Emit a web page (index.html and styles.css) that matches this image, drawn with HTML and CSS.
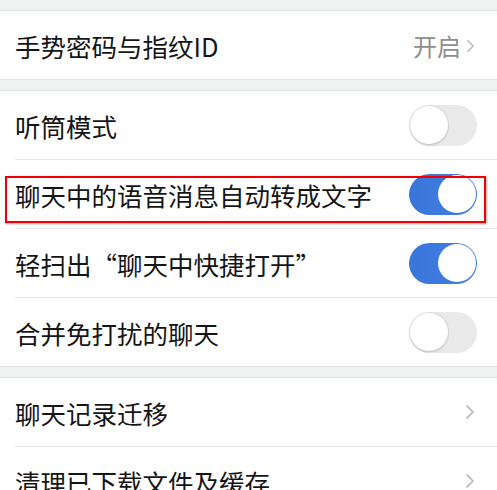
FILE: index.html
```html
<!DOCTYPE html>
<html lang="zh">
<head>
<meta charset="utf-8">
<link rel="stylesheet" href="styles.css">
</head>
<body>
<div class="page">
  <div class="group">
    <div class="row">
      <span class="label">手势密码与指纹ID</span>
      <span class="value">开启<svg class="chev chev-sm" viewBox="0 0 10 16"><polyline points="1.5,1.5 8,8 1.5,14.5"/></svg></span>
    </div>
  </div>
  <div class="group">
    <div class="row">
      <span class="label">听筒模式</span>
      <span class="toggle"><span class="knob"></span></span>
    </div>
    <div class="row highlighted">
      <span class="label">聊天中的语音消息自动转成文字</span>
      <span class="toggle on"><span class="knob"></span></span>
      <span class="mark"></span>
    </div>
    <div class="row">
      <span class="label">轻扫出“聊天中快捷打开”</span>
      <span class="toggle on"><span class="knob"></span></span>
    </div>
    <div class="row">
      <span class="label">合并免打扰的聊天</span>
      <span class="toggle"><span class="knob"></span></span>
    </div>
  </div>
  <div class="group group-wide">
    <div class="row">
      <span class="label">聊天记录迁移</span>
      <svg class="chev" viewBox="0 0 10 16"><polyline points="1.5,1.5 8,8 1.5,14.5"/></svg>
    </div>
    <div class="row">
      <span class="label">清理已下载文件及缓存</span>
      <svg class="chev" viewBox="0 0 10 16"><polyline points="1.5,1.5 8,8 1.5,14.5"/></svg>
    </div>
  </div>
</div>
</body>
</html>
```
FILE: styles.css
```css
html, body {
  margin: 0;
  padding: 0;
  background: #f0f1f1;
}
body {
  width: 497px;
  height: 490px;
  overflow: hidden;
  font-family: "Noto Sans CJK SC", "Noto Sans", sans-serif;
}
.page {
  padding-top: 10px;
}
.group {
  background: #fff;
  border-top: 1px solid #e3e3e3;
  border-bottom: 1px solid #e3e3e3;
  margin-bottom: 10px;
}
.group-wide {
  margin-top: 1px;
}
.row {
  position: relative;
  height: 68px;
  margin-left: 15px;
  padding-right: 20px;
  display: flex;
  align-items: center;
  justify-content: space-between;
  border-bottom: 1px solid #e6e6e6;
}
.row:last-child {
  border-bottom: none;
}
.label {
  font-size: 25.5px;
  color: #151515;
  line-height: 1;
  padding-top: 2px;
}
.value {
  display: flex;
  align-items: center;
  font-size: 24px;
  color: #8e8e8e;
  line-height: 1;
  padding-top: 2px;
  margin-right: 2px;
}
.chev {
  width: 10px;
  height: 16px;
  fill: none;
  stroke: #c3c3c6;
  stroke-width: 2;
  margin-right: 2px;
}
.chev-sm {
  width: 9px;
  height: 14px;
  margin-left: 5px;
  margin-right: 0;
}
.toggle {
  position: relative;
  width: 68px;
  height: 41px;
  border-radius: 21px;
  background: #e9e9ea;
  flex-shrink: 0;
}
.toggle .knob {
  position: absolute;
  top: 1.5px;
  left: 1px;
  width: 38px;
  height: 38px;
  border-radius: 50%;
  background: #fff;
  box-shadow: 0 0 1px 1px rgba(0, 0, 0, 0.08), 0 2px 2px rgba(0, 0, 0, 0.08);
}
.toggle.on {
  background: linear-gradient(90deg, #3a76da, #3f80e2);
}
.toggle.on .knob {
  left: auto;
  right: 1.5px;
  box-shadow: none;
}
.mark {
  position: absolute;
  left: -10px;
  top: 16px;
  width: 477px;
  height: 43px;
  border: 2px solid #f00000;
  box-shadow: 1px 1px 2px rgba(0, 0, 0, 0.35);
}
```
